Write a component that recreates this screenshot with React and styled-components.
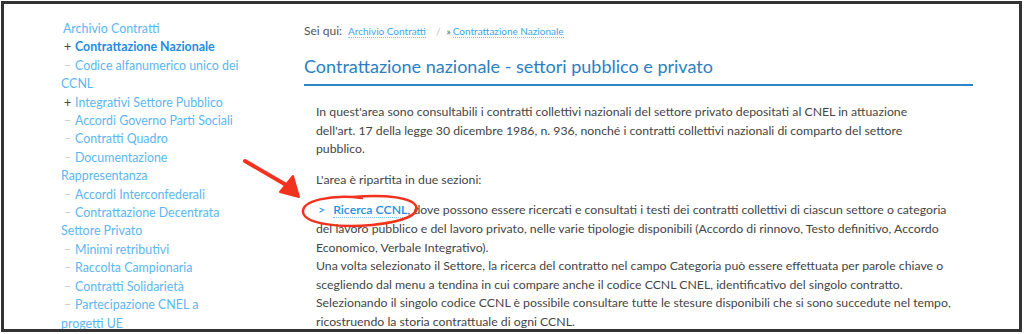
import React from "react";
import styled, { createGlobalStyle } from "styled-components";

const Global = createGlobalStyle`
  html, body {
    margin: 0;
    padding: 0;
    background: #fff;
  }
  body {
    font-family: Lato, "Open Sans", sans-serif;
  }
`;

const Frame = styled.div`
  position: relative;
  box-sizing: border-box;
  margin: 1px 0 0 1px;
  width: 1021px;
  height: 331px;
  border: 3px solid #333;
  overflow: hidden;
  display: flex;
  padding-top: 15px;
  background: #fff;
`;

const Sidebar = styled.ul`
  list-style: none;
  margin: 1px 0 0 57px;
  padding: 0;
  width: 181px;
  flex: none;
  font-size: 12.4px;
  line-height: 18.4px;
`;

const NavItem = styled.li`
  color: ${p => (p.active ? "#1c8ce4" : "#5cb6f2")};
  font-weight: ${p => (p.active ? 700 : 400)};
  padding-left: ${p => (p.head ? "2px" : "0")};
`;

const Marker = styled.span`
  display: inline-block;
  width: 14px;
  padding-left: 3px;
  box-sizing: border-box;
  color: ${p => (p.plus ? "#444" : "#ccc")};
  font-weight: 400;
`;

const Main = styled.main`
  margin-left: 62px;
  width: 669px;
  flex: none;
`;

const Crumbs = styled.div`
  display: flex;
  align-items: baseline;
  color: #555;
  font-size: 12px;
  line-height: 18px;
  padding-top: 3px;
`;

const CrumbLink = styled.a`
  color: #3da5ee;
  font-size: 10px;
  text-decoration: none;
  border-bottom: 1px dotted #7cc2f2;
  line-height: 12px;
  margin-left: ${p => p.gap || 0}px;
`;

const Sep = styled.span`
  color: #bbb;
  font-size: 10px;
  margin: 0 6px 0 10px;
`;

const Raquo = styled.span`
  color: #555;
  font-size: 10px;
  margin-right: 2px;
`;

const Title = styled.h1`
  margin: 14px 0 0;
  padding-bottom: 6px;
  font-size: 18px;
  line-height: 24px;
  font-weight: 400;
  color: #2b80c3;
  border-bottom: 2px solid #2b86c9;
`;

const Body = styled.div`
  padding: 17px 8px 0 12px;
  color: #454545;
  font-size: 12.27px;
  line-height: 18.6px;
`;

const Para = styled.p`
  margin: 0 0 12px;
`;

const Chevron = styled.span`
  color: #2a8ee0;
  margin: 0 8px 0 2px;
`;

const Strong = styled.a`
  color: #1e8ee4;
  font-weight: 600;
  text-decoration: none;
  border-bottom: 1px dotted #7cc2f2;
`;

const Overlay = styled.svg`
  position: absolute;
  left: -4px;
  top: -4px;
  pointer-events: none;
`;

const nav = [
  { t: "Archivio Contratti", head: true },
  { t: "Contrattazione Nazionale", m: "+", active: true },
  { t: "Codice alfanumerico unico dei CCNL", m: "–" },
  { t: "Integrativi Settore Pubblico", m: "+" },
  { t: "Accordi Governo Parti Sociali", m: "–" },
  { t: "Contratti Quadro", m: "–" },
  { t: "Documentazione Rappresentanza", m: "–" },
  { t: "Accordi Interconfederali", m: "–" },
  { t: "Contrattazione Decentrata Settore Privato", m: "–" },
  { t: "Minimi retributivi", m: "–" },
  { t: "Raccolta Campionaria", m: "–" },
  { t: "Contratti Solidarietà", m: "–" },
  { t: "Partecipazione CNEL a progetti UE", m: "–" }
];

export default function App() {
  return (
    <>
      <Global />
      <Frame>
        <Sidebar>
          {nav.map(n => (
            <NavItem key={n.t} active={n.active} head={n.head}>
              {n.m && <Marker plus={n.m === "+"}>{n.m}</Marker>}
              {n.t}
            </NavItem>
          ))}
        </Sidebar>
        <Main>
          <Crumbs>
            <span>Sei qui:</span>
            <CrumbLink gap={6}>Archivio Contratti</CrumbLink>
            <Sep>/</Sep>
            <Raquo>»</Raquo>
            <CrumbLink>Contrattazione Nazionale</CrumbLink>
          </Crumbs>
          <Title>Contrattazione nazionale - settori pubblico e privato</Title>
          <Body>
            <Para>
              In quest'area sono consultabili i contratti collettivi nazionali del settore privato
              depositati al CNEL in attuazione
              <br />
              dell'art. 17 della legge 30 dicembre 1986, n. 936, nonché i contratti collettivi
              nazionali di comparto del settore
              <br />
              pubblico.
            </Para>
            <Para>L'area è ripartita in due sezioni:</Para>
            <Para>
              <Chevron>&gt;</Chevron>
              <Strong>Ricerca CCNL</Strong>, dove possono essere ricercati e consultati i testi dei
              contratti collettivi di ciascun settore o categoria del lavoro pubblico e del lavoro
              privato, nelle varie tipologie disponibili (Accordo di rinnovo, Testo definitivo,
              Accordo Economico, Verbale Integrativo).
              <br />
              Una volta selezionato il Settore, la ricerca del contratto nel campo Categoria può
              essere effettuata per parole chiave o scegliendo dal menu a tendina in cui compare
              anche il codice CCNL CNEL, identificativo del singolo contratto.
              <br />
              Selezionando il singolo codice CCNL è possibile consultare tutte le stesure
              disponibili che si sono succedute nel tempo, ricostruendo la storia contrattuale di
              ogni CCNL.
            </Para>
          </Body>
        </Main>
        <Overlay width="1024" height="334" viewBox="0 0 1024 334">
          <g fill="none" stroke="#f0321e" strokeLinecap="round" strokeLinejoin="round">
            <path d="M245 161 L288 186" strokeWidth="4" />
            <path d="M362 198 C330 194 302 201 303 212 C304 224 340 228 372 225 C402 222 420 215 416 206 C412 198 388 194 352 197" strokeWidth="2.5" />
          </g>
          <path d="M280 192 L293 176 L299 197 Z" fill="#f0321e" stroke="#f0321e" strokeWidth="2" strokeLinejoin="round" />
        </Overlay>
      </Frame>
    </>
  );
}
